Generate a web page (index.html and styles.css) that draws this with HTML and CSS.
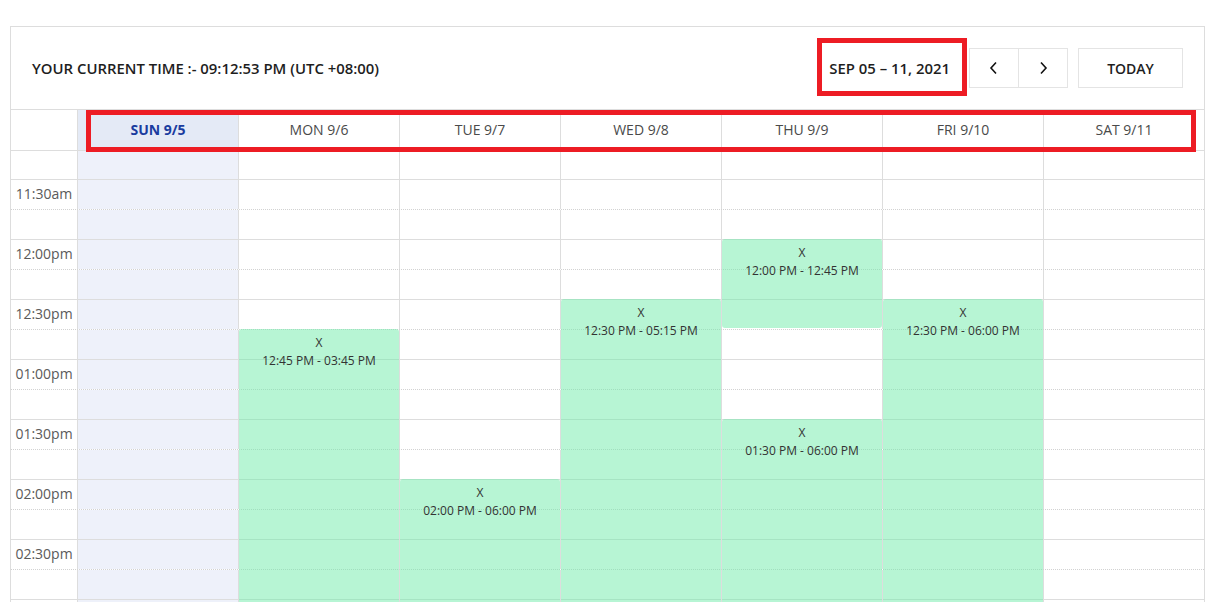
FILE: index.html
```html
<!DOCTYPE html>
<html>
<head>
<meta charset="utf-8">
<link rel="stylesheet" href="styles.css">
</head>
<body>
<div class="cal">
  <div class="toolbar">
    <div class="now">YOUR CURRENT TIME :- 09:12:53 PM (UTC +08:00)</div>
    <div class="controls">
      <div class="range">SEP 05 – 11, 2021</div>
      <div class="btn-group">
        <button class="btn nav"><svg width="10" height="14" viewBox="0 0 10 14"><path d="M7 1.5 L2 7 L7 12.5" fill="none" stroke="#111" stroke-width="1.6"/></svg></button>
        <button class="btn nav second"><svg width="10" height="14" viewBox="0 0 10 14"><path d="M3 1.5 L8 7 L3 12.5" fill="none" stroke="#111" stroke-width="1.6"/></svg></button>
      </div>
      <button class="btn today">TODAY</button>
    </div>
  </div>
  <div class="days">
    <div class="gut"></div>
    <div class="day is-today">SUN 9/5</div>
    <div class="day">MON 9/6</div>
    <div class="day">TUE 9/7</div>
    <div class="day">WED 9/8</div>
    <div class="day">THU 9/9</div>
    <div class="day">FRI 9/10</div>
    <div class="day">SAT 9/11</div>
  </div>
  <div class="cal-body">
    <div class="slats" id="slats"></div>
    <div class="events">
      <div class="gut"></div>
      <div class="col"></div>
      <div class="col">
        <div class="event" style="top:178px;height:359px"><div>X</div><div>12:45 PM - 03:45 PM</div></div>
      </div>
      <div class="col">
        <div class="event" style="top:328px;height:479px"><div>X</div><div>02:00 PM - 06:00 PM</div></div>
      </div>
      <div class="col">
        <div class="event" style="top:148px;height:569px"><div>X</div><div>12:30 PM - 05:15 PM</div></div>
      </div>
      <div class="col">
        <div class="event" style="top:88px;height:89px"><div>X</div><div>12:00 PM - 12:45 PM</div></div>
        <div class="event" style="top:268px;height:539px"><div>X</div><div>01:30 PM - 06:00 PM</div></div>
      </div>
      <div class="col">
        <div class="event" style="top:148px;height:659px"><div>X</div><div>12:30 PM - 06:00 PM</div></div>
      </div>
      <div class="col"></div>
    </div>
  </div>
</div>
<div class="mark mark-range"></div>
<div class="mark mark-days"></div>
<script>
(function(){
  var labels = ["11:30am","12:00pm","12:30pm","01:00pm","01:30pm","02:00pm","02:30pm",""];
  var s = document.getElementById("slats");
  function row(cls, label){
    var r = document.createElement("div");
    r.className = "slat " + cls;
    var g = document.createElement("div");
    g.className = "label";
    g.textContent = label || "";
    r.appendChild(g);
    for (var i = 0; i < 7; i++) {
      var c = document.createElement("div");
      c.className = "cell" + (i === 0 ? " sun" : "");
      r.appendChild(c);
    }
    s.appendChild(r);
  }
  row("partial", "");
  labels.forEach(function(l){ row("major", l); row("minor", ""); });
})();
</script>
</body>
</html>
```
FILE: styles.css
```css
html, body {
  margin: 0;
  padding: 0;
  background: #fff;
  overflow: hidden;
}
body {
  padding: 26px 0 0 10px;
  font-family: "Open Sans", "Liberation Sans", sans-serif;
  color: #222;
}
.cal {
  width: 1195px;
  box-sizing: border-box;
  border: 1px solid #ddd;
  border-bottom: 0;
}
.toolbar {
  height: 83px;
  box-sizing: border-box;
  border-bottom: 1px solid #ddd;
  display: flex;
  align-items: center;
  justify-content: space-between;
  padding: 0 21px 0 21px;
}
.now {
  font-size: 14.9px;
  font-weight: 600;
  color: #1e1e1e;
}
.controls {
  display: flex;
  align-items: center;
}
.range {
  font-size: 14.9px;
  font-weight: 600;
  color: #1e1e1e;
  margin-right: 19px;
}
.btn-group {
  display: flex;
  margin-right: 10px;
}
.btn {
  font-family: inherit;
  background: #fff;
  border: 1px solid #e4e4e4;
  height: 40px;
  box-sizing: border-box;
  padding: 0;
  margin: 0;
  display: flex;
  align-items: center;
  justify-content: center;
  color: #1e1e1e;
}
.nav {
  width: 50px;
}
.nav.second {
  margin-left: -1px;
}
.today {
  width: 105px;
  font-size: 14px;
  font-weight: 600;
}
.days {
  display: grid;
  grid-template-columns: 66px repeat(7, 161px);
  height: 41px;
  box-sizing: border-box;
  border-bottom: 1px solid #ddd;
}
.day {
  border-left: 1px solid #ddd;
  text-align: center;
  line-height: 40px;
  font-size: 14px;
  font-weight: 400;
  color: #4a4a4a;
}
.day.is-today {
  background: #e4eaf6;
  color: #1a3c9f;
  font-weight: 700;
}
.cal-body {
  position: relative;
  height: 451px;
  overflow: hidden;
}
.slat {
  display: grid;
  grid-template-columns: 66px repeat(7, 161px);
  height: 30px;
  box-sizing: border-box;
}
.slat.partial {
  height: 28px;
}
.slat.major {
  border-top: 1px solid #ddd;
}
.slat.minor {
  border-top: 1px dotted #d2d2d2;
}
.label {
  font-size: 14px;
  line-height: 20px;
  padding-top: 4px;
  text-align: center;
  color: #5a5a5a;
  white-space: nowrap;
}
.cell {
  border-left: 1px solid #ddd;
}
.cell.sun {
  background: #eef1fa;
}
.events {
  position: absolute;
  left: 0;
  top: 0;
  right: 0;
  bottom: 0;
  display: grid;
  grid-template-columns: 66px repeat(7, 161px);
}
.col {
  position: relative;
  border-left: 1px solid transparent;
}
.event {
  position: absolute;
  left: 0;
  right: 0;
  background: rgba(111, 235, 169, 0.5);
  border-radius: 3px;
  text-align: center;
  font-size: 12px;
  line-height: 18px;
  padding-top: 5px;
  box-sizing: border-box;
  color: #333;
}
.mark {
  position: absolute;
  box-sizing: border-box;
  border: 5px solid #ed1c24;
}
.mark-range {
  left: 817px;
  top: 38px;
  width: 150px;
  height: 58px;
}
.mark-days {
  left: 86px;
  top: 110px;
  width: 1110px;
  height: 42px;
}
```
